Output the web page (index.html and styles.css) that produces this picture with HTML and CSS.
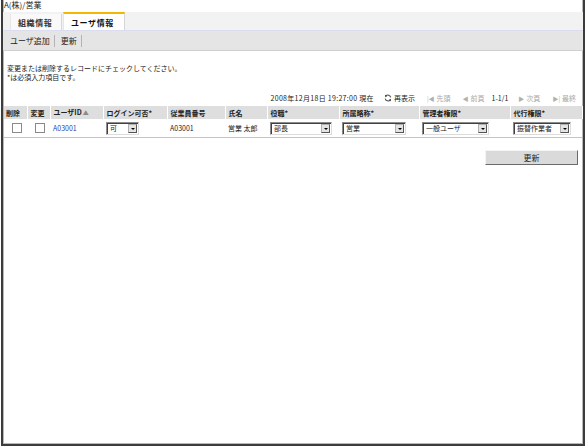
FILE: index.html
```html
<!DOCTYPE html>
<html lang="ja">
<head>
<meta charset="utf-8">
<link rel="stylesheet" href="styles.css">
</head>
<body>
<div class="frame">
  <div class="title">A(株)/営業</div>
  <div class="tabbar">
    <div class="tab">組織情報</div>
    <div class="tab active">ユーザ情報</div>
  </div>
  <div class="toolbar">
    <span class="tool">ユーザ追加</span><span class="tool">更新</span>
  </div>
  <div class="content">
    <div class="msg">
      <div>変更または削除するレコードにチェックしてください。</div>
      <div>*は必須入力項目です。</div>
    </div>
    <div class="pager">
      <span class="stamp">2008年12月18日 19:27:00 現在</span>
      <span class="refresh"><svg width="8" height="8" viewBox="0 0 10 10"><path d="M8.5 4.2A3.6 3.6 0 0 0 2.2 2.6" fill="none" stroke="#4a4a4a" stroke-width="1.3"/><path d="M1.2 0.8L1.4 4L4.2 2.6Z" fill="#4a4a4a"/><path d="M1.5 5.8A3.6 3.6 0 0 0 7.8 7.4" fill="none" stroke="#4a4a4a" stroke-width="1.3"/><path d="M8.8 9.2L8.6 6L5.8 7.4Z" fill="#4a4a4a"/></svg>再表示</span>
      <span class="nav off"><b class="g">|◀</b>先頭</span>
      <span class="nav off"><b class="g">◀</b>前頁</span>
      <span class="count">1-1/1</span>
      <span class="nav off"><b class="g">▶</b>次頁</span>
      <span class="nav off"><b class="g">▶|</b>最終</span>
    </div>
    <table class="grid">
      <colgroup>
        <col class="c1"><col class="c2"><col class="c3"><col class="c4"><col class="c5"><col class="c6"><col class="c7"><col class="c8"><col class="c9"><col class="c10">
      </colgroup>
      <thead>
        <tr>
          <th>削除</th><th>変更</th><th>ユーザID<span class="sort">▲</span></th><th>ログイン可否*</th><th>従業員番号</th><th>氏名</th><th>役職*</th><th>所属略称*</th><th>管理者権限*</th><th>代行権限*</th>
        </tr>
      </thead>
      <tbody>
        <tr>
          <td class="ck"><span class="box"></span></td>
          <td class="ck"><span class="box"></span></td>
          <td><span class="link">A03001</span></td>
          <td><span class="sel w-login"><span class="val">可</span><span class="arr"></span></span></td>
          <td>A03001</td>
          <td>営業 太郎</td>
          <td><span class="sel w-post"><span class="val">部長</span><span class="arr"></span></span></td>
          <td><span class="sel w-dept"><span class="val">営業</span><span class="arr"></span></span></td>
          <td><span class="sel w-admin"><span class="val">一般ユーザ</span><span class="arr"></span></span></td>
          <td><span class="sel w-proxy"><span class="val">振替作業者</span><span class="arr"></span></span></td>
        </tr>
      </tbody>
    </table>
    <div class="actions"><button class="btn">更新</button></div>
  </div>
</div>
</body>
</html>
```

FILE: styles.css
```css
html, body {
  margin: 0;
  padding: 0;
  background: #ffffff;
}
body {
  font-family: "Noto Sans CJK JP", "DejaVu Sans", sans-serif;
  font-size: 7px;
  color: #1a1a1a;
}
.frame {
  box-sizing: border-box;
  width: 584px;
  height: 446px;
  margin-left: 1px;
  border-left: 2px solid #3c3c3c;
  border-right: 2px solid #3c3c3c;
  border-bottom: 2px solid #3c3c3c;
  box-shadow: inset 1px 0 0 #b8b8b8, inset -1px -1px 0 #b8b8b8;
  display: flex;
  flex-direction: column;
}
.title {
  height: 12px;
  line-height: 10px;
  padding-left: 1px;
  font-size: 8px;
  color: #222;
}
.tabbar {
  height: 18px;
  background: #f2f2f2;
  display: flex;
  align-items: flex-end;
  padding-left: 7px;
  gap: 1px;
}
.tab {
  box-sizing: border-box;
  width: 52px;
  height: 16px;
  background: #f9f9f9;
  border-right: 1px solid #d6d6d6;
  border-left: 1px solid #e6e6e6;
  font-size: 8px;
  font-weight: bold;
  letter-spacing: 0.6px;
  color: #333;
  display: flex;
  align-items: center;
  padding-left: 7px;
}
.tab.active {
  width: 62px;
  height: 18px;
  background: #ffffff;
  border-top: 2px solid #f2b705;
  color: #111;
}
.toolbar {
  height: 21px;
  background: #e5e5e5;
  border-top: 1px solid #dcdcf0;
  border-bottom: 1px solid #d0d0d0;
  display: flex;
  align-items: center;
  padding-left: 6px;
  box-sizing: border-box;
}
.tool {
  font-size: 8px;
  color: #222;
  padding: 0 4px 0 1px;
  margin-right: 5px;
  border-right: 1px solid #b4b4b4;
  line-height: 12px;
}
.content {
  padding: 13px 0 0 0;
}
.msg {
  padding-left: 4px;
  line-height: 9px;
  color: #222;
}
.pager {
  margin-top: 11px;
  display: flex;
  align-items: center;
  justify-content: flex-end;
  padding-right: 7px;
  height: 10px;
  gap: 12px;
  color: #222;
}
.stamp {
  letter-spacing: 0.3px;
}
.refresh {
  display: flex;
  align-items: center;
  gap: 2px;
  margin-left: -2px;
}
.nav.off {
  color: #a8a8a8;
}
.nav .g {
  font-weight: normal;
  font-size: 6px;
  margin-right: 2px;
  color: #b0b0b0;
}
.count {
  color: #222;
  margin-left: -5px;
  margin-right: -2px;
}
.grid {
  margin: 3px 0 0 1px;
  border-collapse: collapse;
  table-layout: fixed;
  width: 578px;
}
.c1 { width: 23px; }
.c2 { width: 23px; }
.c3 { width: 53px; }
.c4 { width: 64px; }
.c5 { width: 58px; }
.c6 { width: 42px; }
.c7 { width: 72px; }
.c8 { width: 80px; }
.c9 { width: 91px; }
.c10 { width: 72px; }
.grid th {
  background: #dedede;
  font-weight: bold;
  text-align: left;
  height: 12px;
  padding: 0 0 0 3px;
  border-right: 1px solid #ffffff;
  white-space: nowrap;
  color: #222;
  line-height: 12px;
}
.grid th:first-child {
  padding-left: 2px;
}
.sort {
  color: #8a8a8a;
  font-size: 6px;
  margin-left: 1px;
}
.grid td {
  height: 18px;
  padding: 0 0 0 3px;
  border-bottom: 1px solid #c4c4c4;
  white-space: nowrap;
  color: #222;
}
.grid td.ck {
  padding-left: 8px;
}
.box {
  display: block;
  width: 8px;
  height: 8px;
  border: 1px solid #8a8a8a;
  background: #fff;
}
.link {
  color: #1f3fb0;
}
.sel {
  box-sizing: border-box;
  display: flex;
  align-items: center;
  height: 13px;
  border: 1px solid #8c8c8c;
  border-right-color: #dcdcdc;
  border-bottom-color: #dcdcdc;
  box-shadow: inset 1px 1px 0 #404040;
  background: #fff;
  padding-left: 3px;
  padding-right: 1px;
}
.sel .val {
  flex: 1;
  overflow: hidden;
}
.sel .arr {
  box-sizing: border-box;
  width: 9px;
  height: 9px;
  background: #e4e4e4;
  border: 1px solid #b0b0b0;
  border-right-color: #555;
  border-bottom-color: #555;
  position: relative;
}
.sel .arr::after {
  content: "";
  position: absolute;
  left: 2px;
  top: 3px;
  border-left: 2px solid transparent;
  border-right: 2px solid transparent;
  border-top: 2px solid #000;
}
.w-login { width: 33px; }
.w-post { width: 62px; }
.w-dept { width: 64px; }
.w-admin { width: 67px; }
.w-proxy { width: 58px; }
.actions {
  display: flex;
  justify-content: flex-end;
  padding: 12px 5px 0 0;
}
.btn {
  box-sizing: border-box;
  width: 93px;
  height: 15px;
  background: #dadada;
  border: 1px solid #f4f4f4;
  border-right-color: #6a6a6a;
  border-bottom-color: #6a6a6a;
  font-family: "Noto Sans CJK JP", sans-serif;
  font-size: 8px;
  color: #222;
  padding: 0;
  line-height: 12px;
}
```
